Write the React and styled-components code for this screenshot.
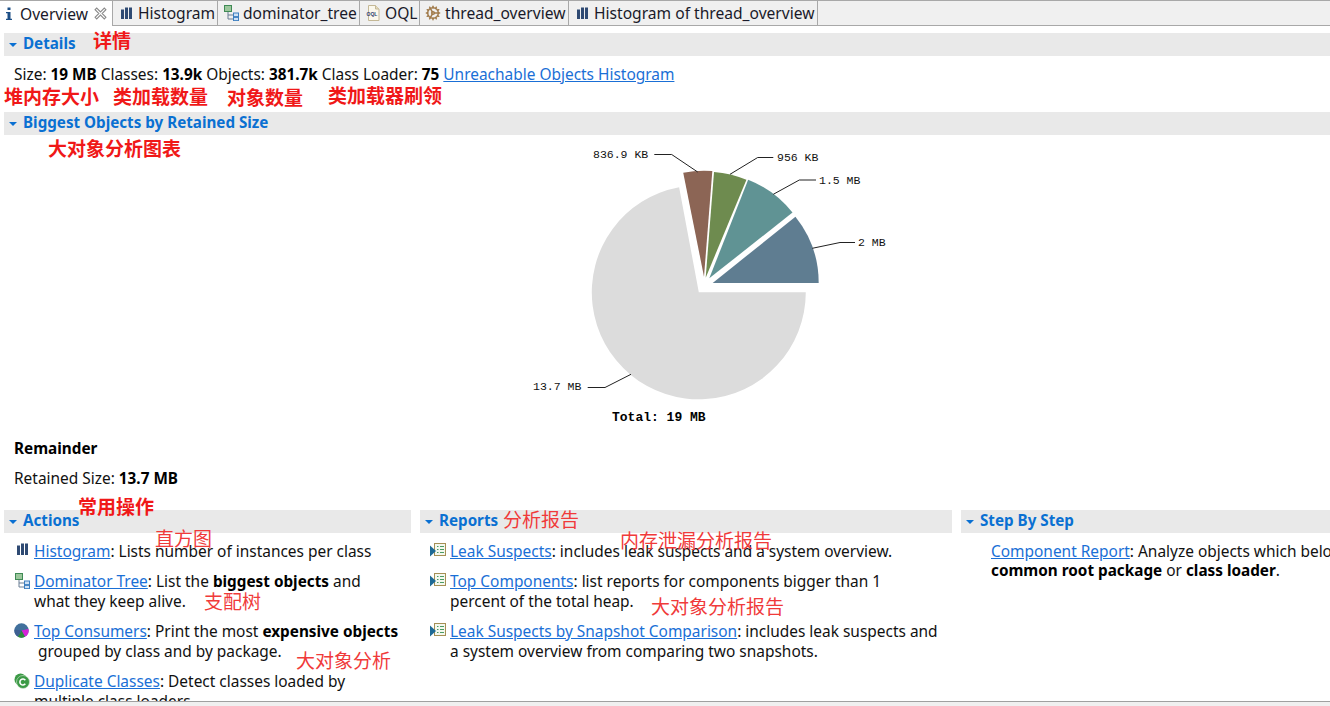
import React from "react";
import styled, { createGlobalStyle } from "styled-components";
import { Cog } from "lucide-react";

const GlobalStyle = createGlobalStyle`
  html, body {
    margin: 0;
    padding: 0;
    height: 100%;
    overflow: hidden;
    background: #fff;
  }
`;

const Page = styled.div`
  width: 1330px;
  height: 706px;
  position: relative;
  display: flex;
  flex-direction: column;
  overflow: hidden;
  font-family: "Noto Sans", "Noto Sans CJK SC", sans-serif;
  font-size: 15.45px;
  line-height: 20px;
  color: #111;
`;

const TabBar = styled.div`
  flex: none;
  height: 26px;
  display: flex;
  box-sizing: border-box;
  background: #f0f0f0;
  border-top: 1px solid #a8a8a8;
  border-bottom: 1px solid #a8a8a8;
  font-size: 15.6px;
`;

const Tab = styled.div`
  box-sizing: border-box;
  width: ${(p) => p.$width}px;
  height: ${(p) => (p.$active ? 25 : 24)}px;
  display: flex;
  align-items: center;
  gap: ${(p) => p.$gap || 4}px;
  padding-left: ${(p) => p.$pad || 5}px;
  white-space: nowrap;
  color: #1a1a2a;
  border-right: 1px solid #a8a8a8;
  background: ${(p) => (p.$active ? "#fff" : "#f0f0f0")};

  svg {
    flex: none;
  }
`;

const Body = styled.div`
  flex: 1;
  min-height: 0;
  overflow: hidden;
  padding-top: 7px;
`;

const HeaderBar = styled.div`
  height: 23px;
  margin-left: ${(p) => p.$indent ?? 4}px;
  display: flex;
  align-items: center;
  gap: 6px;
  padding-left: 5px;
  background: #e9e9e9;
`;

const HeaderLabel = styled.span`
  color: #0a70d2;
  font-weight: 700;
  font-size: 15.2px;
  padding-bottom: 4px;
`;

const Caret = styled.span`
  width: 0;
  height: 0;
  border-left: 4px solid transparent;
  border-right: 4px solid transparent;
  border-top: 4px solid #0a70d2;
`;

const DetailsRow = styled.div`
  height: 56px;
  box-sizing: border-box;
  padding: 8px 0 0 14px;
  white-space: nowrap;
`;

const A = styled.a`
  color: #1a6fd6;
  text-decoration: underline;
`;

const B = styled.b`
  font-weight: 700;
  font-size: 15.3px;
  color: #000;
`;

const ChartArea = styled.div`
  height: 303px;
  padding-left: 520px;
`;

const ChartSvg = styled.svg`
  display: block;
`;

const LabelText = styled.text`
  font-family: "Liberation Mono", monospace;
  font-size: 11.5px;
  fill: #111;
`;

const TotalText = styled.text`
  font-family: "Liberation Mono", monospace;
  font-size: 13px;
  font-weight: 700;
  fill: #000;
`;

const Summary = styled.div`
  padding-left: 14px;
  display: flex;
  flex-direction: column;
  gap: 10px;
  height: 72px;
`;

const Columns = styled.div`
  display: grid;
  grid-template-columns: 407px 532px 369px;
  gap: 9px;
  margin-left: 4px;
`;

const ColumnBody = styled.div`
  padding-top: 8px;
  display: flex;
  flex-direction: column;
  gap: 10px;
`;

const Item = styled.div`
  display: grid;
  grid-template-columns: 30px auto;
  white-space: nowrap;
  line-height: ${(p) => (p.$tight ? 19 : 20)}px;
  margin-top: ${(p) => (p.$tight ? 1 : 0)}px;
`;

const ItemIcon = styled.span`
  display: flex;
  justify-content: flex-end;
  padding: 2px ${(p) => p.$right ?? 4}px 0 0;
  height: 16px;
`;

const StatusBar = styled.div`
  flex: none;
  height: 5px;
  box-sizing: border-box;
  background: #f0f0f0;
  border-top: 1px solid #a0a0a0;
`;

const Note = styled.span`
  position: absolute;
  left: ${(p) => p.$x}px;
  top: ${(p) => p.$y}px;
  font-family: "Noto Sans CJK SC", sans-serif;
  font-size: 19px;
  line-height: 22px;
  white-space: nowrap;
  color: ${(p) => (p.$bold ? "#f01818" : "#f03a3a")};
  font-weight: ${(p) => (p.$bold ? 700 : 400)};
`;

const OqlLabel = styled.text`
  font-family: "Liberation Sans", sans-serif;
  font-size: 5px;
  font-weight: 700;
  fill: #2b3f70;
`;

const SectionHeader = ({ indent, children }) => (
  <HeaderBar $indent={indent}>
    <Caret />
    <HeaderLabel>{children}</HeaderLabel>
  </HeaderBar>
);

const Bars = () => (
  <svg width="11" height="12" viewBox="0 0 11 12">
    <path d="M0 2.500h3V12H0zM4 0.500h3V12H4zM8 0.500h3V12H8z" fill="#2f4a73" />
  </svg>
);

const InfoIcon = () => (
  <svg width="10" height="14" viewBox="0 0 10 14">
    <path d="M3.500 0.500h3v2.600h-3zM2 5h4.500v6.800H8V13H2v-1.200h1.500V6.200H2z" fill="#1c4f86" />
  </svg>
);

const CloseIcon = () => (
  <svg width="13" height="13" viewBox="0 0 12 12">
    <path
      d="M1 2.500L2.500 1 6 4.500 9.500 1 11 2.500 7.500 6 11 9.500 9.500 11 6 7.500 2.500 11 1 9.500 4.500 6z"
      fill="#fff"
      stroke="#8a8a8a"
    />
  </svg>
);

const TreeIcon = () => (
  <svg width="15" height="16" viewBox="0 0 15 16">
    <rect x="0.500" y="0.500" width="7" height="6" fill="#9cc79c" stroke="#3f8a55" />
    <path d="M4 7v7h5M4 10h5" fill="none" stroke="#6a7f95" />
    <rect x="9.500" y="8" width="5" height="3.600" fill="#cfe2f6" stroke="#3d7fc0" />
    <rect x="9.500" y="12.400" width="5" height="3.200" fill="#cfe2f6" stroke="#3d7fc0" />
  </svg>
);

const OqlIcon = () => (
  <svg width="15" height="16" viewBox="0 0 15 16">
    <path d="M2.500 0.500h7l3.500 3.500v11.500H2.500z" fill="#fbf8ec" stroke="#c4b896" />
    <path d="M9.500 0.500V4H13" fill="#e6dcbc" stroke="#c4b896" />
    <OqlLabel x="0.500" y="11">OQL</OqlLabel>
  </svg>
);

const ConsumersIcon = () => (
  <svg width="15" height="15" viewBox="0 0 15 15">
    <circle cx="7.500" cy="7.500" r="7.200" fill="#41709c" />
    <path d="M7.500 7.500L14.400 6A7.200 7.200 0 0 1 11 13.800z" fill="#d623d6" />
    <path d="M7.500 7.500L11 13.800A7.200 7.200 0 0 1 3.800 13.700z" fill="#2e8b3c" />
    <path d="M7.500 7.500L3.800 13.700A7.200 7.200 0 0 1 0.600 6.500z" fill="#3d5f92" />
  </svg>
);

const DuplicateIcon = () => (
  <svg width="16" height="16" viewBox="0 0 16 16">
    <circle cx="6.500" cy="6.500" r="6" fill="#3c9a46" />
    <circle cx="9" cy="9" r="6.500" fill="#3c9a46" stroke="#d5ead7" strokeWidth="0.600" />
    <path d="M11.300 7.200A3 3 0 1 0 11.300 10.800" fill="none" stroke="#fff" strokeWidth="1.600" />
  </svg>
);

const ReportIcon = () => (
  <svg width="16" height="15" viewBox="0 0 16 15">
    <rect x="4.500" y="0.500" width="11" height="12" fill="#f4f8ee" stroke="#a58f55" />
    <path d="M7 3.500h1.500M10 3.500h4M7 6.500h1.500M10 6.500h4M7 9.500h1.500M10 9.500h4" stroke="#4b9a63" />
    <path d="M0 2.500L6 8 0 13.500z" fill="#1f6a95" />
  </svg>
);

const polar = (cx, cy, r, deg) => {
  const rad = (deg * Math.PI) / 180;
  return `${(cx + r * Math.cos(rad)).toFixed(2)} ${(cy - r * Math.sin(rad)).toFixed(2)}`;
};

const slices = [
  { cx: 698.8, cy: 292.3, r: 107, from: 100.6, to: 360, color: "#dcdcdc" },
  { cx: 704, cy: 276.7, r: 106, from: 85.5, to: 101.3, color: "#8c6555" },
  { cx: 705.7, cy: 277.7, r: 106, from: 67.4, to: 85.5, color: "#6e8b4f" },
  { cx: 709.3, cy: 278.3, r: 106, from: 38.3, to: 68.5, color: "#609394" },
  { cx: 712.7, cy: 283, r: 106, from: 0, to: 38.7, color: "#5f7d91" },
];

const leaders = [
  { d: "M812.300 248.300L840 242.500H855", x: 858, y: 246, label: "2 MB" },
  { d: "M773.300 194.300L799.300 180H816", x: 819, y: 184, label: "1.5 MB" },
  { d: "M730 174.300L757.700 157.500H773.300", x: 777, y: 161, label: "956 KB" },
  { d: "M697.700 172L671.700 154.500H654.300", x: 593, y: 158, label: "836.9 KB" },
  { d: "M631 374.300L605 387.500H587.700", x: 533, y: 390, label: "13.7 MB" },
];

const PieChart = () => (
  <ChartSvg width="400" height="303" viewBox="520 135 400 303">
    {slices.map((s) => (
      <path
        key={s.color}
        fill={s.color}
        d={`M${s.cx} ${s.cy}L${polar(s.cx, s.cy, s.r, s.from)}A${s.r} ${s.r} 0 ${
          s.to - s.from > 180 ? 1 : 0
        } 0 ${polar(s.cx, s.cy, s.r, s.to)}Z`}
      />
    ))}
    {leaders.map((l) => (
      <g key={l.label}>
        <path d={l.d} fill="none" stroke="#222" strokeWidth="1" />
        <LabelText x={l.x} y={l.y}>{l.label}</LabelText>
      </g>
    ))}
    <TotalText x="612" y="421">Total: 19 MB</TotalText>
  </ChartSvg>
);

const notes = [
  { x: 93, y: 29, text: "详情", bold: true },
  { x: 4, y: 85, text: "堆内存大小", bold: true },
  { x: 113, y: 85, text: "类加载数量", bold: true },
  { x: 227, y: 86, text: "对象数量", bold: true },
  { x: 328, y: 84, text: "类加载器刷领", bold: true },
  { x: 48, y: 137, text: "大对象分析图表", bold: true },
  { x: 78, y: 495, text: "常用操作", bold: true },
  { x: 155, y: 527, text: "直方图" },
  { x: 204, y: 590, text: "支配树" },
  { x: 296, y: 649, text: "大对象分析" },
  { x: 503, y: 508, text: "分析报告" },
  { x: 620, y: 529, text: "内存泄漏分析报告" },
  { x: 651, y: 595, text: "大对象分析报告" },
];

function App() {
  return (
    <Page>
      <GlobalStyle />
      <TabBar>
        <Tab $active $width={113} $gap={6} $pad={4}>
          <InfoIcon />
          <span>Overview</span>
          <CloseIcon />
        </Tab>
        <Tab $width={105} $pad={8} $gap={6}>
          <Bars />
          <span>Histogram</span>
        </Tab>
        <Tab $width={142} $pad={6} $gap={4}>
          <TreeIcon />
          <span>dominator_tree</span>
        </Tab>
        <Tab $width={60} $pad={6} $gap={4}>
          <OqlIcon />
          <span>OQL</span>
        </Tab>
        <Tab $width={149} $pad={5} $gap={4}>
          <Cog size={16} color="#a07a4a" strokeWidth={2.2} />
          <span>thread_overview</span>
        </Tab>
        <Tab $width={249} $pad={8} $gap={6}>
          <Bars />
          <span>Histogram of thread_overview</span>
        </Tab>
      </TabBar>

      <Body>
        <SectionHeader>Details</SectionHeader>
        <DetailsRow>
          Size: <B>19 MB</B> Classes: <B>13.9k</B> Objects: <B>381.7k</B> Class Loader: <B>75</B>{" "}
          <A>Unreachable Objects Histogram</A>
        </DetailsRow>

        <SectionHeader>Biggest Objects by Retained Size</SectionHeader>
        <ChartArea>
          <PieChart />
        </ChartArea>
        <Summary>
          <B>Remainder</B>
          <span>
            Retained Size: <B>13.7 MB</B>
          </span>
        </Summary>

        <Columns>
          <div>
            <SectionHeader indent={0}>Actions</SectionHeader>
            <ColumnBody>
              <Item>
                <ItemIcon $right={6}>
                  <Bars />
                </ItemIcon>
                <span>
                  <A>Histogram</A>: Lists number of instances per class
                </span>
              </Item>
              <Item>
                <ItemIcon>
                  <TreeIcon />
                </ItemIcon>
                <span>
                  <A>Dominator Tree</A>: List the <B>biggest objects</B> and
                  <br />
                  what they keep alive.
                </span>
              </Item>
              <Item>
                <ItemIcon $right={5}>
                  <ConsumersIcon />
                </ItemIcon>
                <span>
                  <A>Top Consumers</A>: Print the most <B>expensive objects</B>
                  <br />
                  {"\u00a0"}grouped by class and by package.
                </span>
              </Item>
              <Item>
                <ItemIcon>
                  <DuplicateIcon />
                </ItemIcon>
                <span>
                  <A>Duplicate Classes</A>: Detect classes loaded by
                  <br />
                  multiple class loaders.
                </span>
              </Item>
            </ColumnBody>
          </div>

          <div>
            <SectionHeader indent={0}>Reports</SectionHeader>
            <ColumnBody>
              <Item>
                <ItemIcon>
                  <ReportIcon />
                </ItemIcon>
                <span>
                  <A>Leak Suspects</A>: includes leak suspects and a system overview.
                </span>
              </Item>
              <Item>
                <ItemIcon>
                  <ReportIcon />
                </ItemIcon>
                <span>
                  <A>Top Components</A>: list reports for components bigger than 1
                  <br />
                  percent of the total heap.
                </span>
              </Item>
              <Item>
                <ItemIcon>
                  <ReportIcon />
                </ItemIcon>
                <span>
                  <A>Leak Suspects by Snapshot Comparison</A>: includes leak suspects and
                  <br />a system overview from comparing two snapshots.
                </span>
              </Item>
            </ColumnBody>
          </div>

          <div>
            <SectionHeader indent={0}>Step By Step</SectionHeader>
            <ColumnBody>
              <Item $tight>
                <span />
                <span>
                  <A>Component Report</A>: Analyze objects which belong to a
                  <br />
                  <B>common root package</B> or <B>class loader</B>.
                </span>
              </Item>
            </ColumnBody>
          </div>
        </Columns>
      </Body>
      <StatusBar />

      {notes.map((n) => (
        <Note key={n.text + n.x} $x={n.x} $y={n.y} $bold={n.bold}>
          {n.text}
        </Note>
      ))}
    </Page>
  );
}

export default App;
